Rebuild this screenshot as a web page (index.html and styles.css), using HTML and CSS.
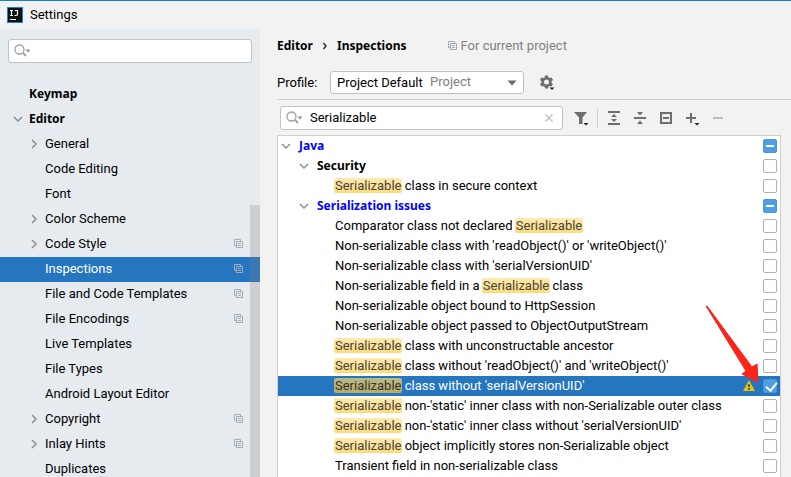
FILE: index.html
```html
<!DOCTYPE html>
<html lang="en">
<head>
<meta charset="utf-8">
<title>Settings</title>
<link rel="stylesheet" href="styles.css">
</head>
<body>
<svg class="defs" aria-hidden="true">
  <symbol id="down" viewBox="0 0 10 10"><path d="M1 3l4 4 4-4" fill="none" stroke="#8c8f92" stroke-width="1.5"/></symbol>
  <symbol id="right" viewBox="0 0 10 10"><path d="M3 1l4 4-4 4" fill="none" stroke="#8c8f92" stroke-width="1.5"/></symbol>
  <symbol id="copy" viewBox="0 0 10 10"><path d="M2.500 6.500H.5V.5H6.500V2.500M2.500 2.500H8.500V8.500H2.500ZM4 4.500H7M4 6.500H7" fill="none" stroke="#a3adb5"/></symbol>
  <symbol id="search" viewBox="0 0 18 14"><circle cx="5.500" cy="5.500" r="4.500" fill="none" stroke="#9aa0a5" stroke-width="1.300"/><path d="M9 9l3 3" stroke="#9aa0a5" stroke-width="1.800"/><path d="M11.500 5.500h5L14 8.500z" fill="#8c9196"/></symbol>
</svg>

<header class="titlebar">
  <svg class="logo" viewBox="0 0 16 16" aria-hidden="true"><path d="M0 0h16v16H0z" fill="#1a7fe0"/><path d="M1 1h14v14H1z" fill="#111"/><path d="M3 3.500h3M4.500 3.500v5M3 8.500h3M8 3.500h3M10.500 3.500v3.500q0 1.500-1.500 1.500H7.500M3 12.500h6" fill="none" stroke="#fff" stroke-width="1.200"/></svg>
  <h1>Settings</h1>
</header>

<div class="window">
  <nav class="sidebar" aria-label="Settings">
    <label class="search side-search">
      <svg class="glass" aria-hidden="true"><use href="#search"/></svg>
      <input type="text" aria-label="Search settings">
    </label>
    <ul class="pages">
      <li class="top"><span class="chev"></span><a href="#">Keymap</a></li>
      <li class="top"><svg class="chev"><use href="#down"/></svg><a href="#">Editor</a></li>
      <li><svg class="chev"><use href="#right"/></svg><a href="#">General</a></li>
      <li><span class="chev"></span><a href="#">Code Editing</a></li>
      <li><span class="chev"></span><a href="#">Font</a></li>
      <li><svg class="chev"><use href="#right"/></svg><a href="#">Color Scheme</a></li>
      <li><svg class="chev"><use href="#right"/></svg><a href="#">Code Style</a><svg class="copy"><use href="#copy"/></svg></li>
      <li class="selected"><span class="chev"></span><a href="#">Inspections</a><svg class="copy"><use href="#copy"/></svg></li>
      <li><span class="chev"></span><a href="#">File and Code Templates</a><svg class="copy"><use href="#copy"/></svg></li>
      <li><span class="chev"></span><a href="#">File Encodings</a><svg class="copy"><use href="#copy"/></svg></li>
      <li><span class="chev"></span><a href="#">Live Templates</a></li>
      <li><span class="chev"></span><a href="#">File Types</a></li>
      <li><span class="chev"></span><a href="#">Android Layout Editor</a></li>
      <li><svg class="chev"><use href="#right"/></svg><a href="#">Copyright</a><svg class="copy"><use href="#copy"/></svg></li>
      <li><svg class="chev"><use href="#right"/></svg><a href="#">Inlay Hints</a><svg class="copy"><use href="#copy"/></svg></li>
      <li><span class="chev"></span><a href="#">Duplicates</a></li>
    </ul>
    <div class="scrollbar"></div>
  </nav>

  <main class="content">
    <div class="crumbs">
      <b>Editor</b>
      <svg class="sep" viewBox="0 0 6 8" aria-hidden="true"><path d="M1.500 1l2.500 3-2.500 3" fill="none" stroke="#222" stroke-width="1.300"/></svg>
      <b>Inspections</b>
      <span class="scope"><svg class="copy"><use href="#copy"/></svg>For current project</span>
    </div>

    <div class="profile">
      <label for="profile">Profile:</label>
      <div class="combo">
        <select id="profile"><option>Project Default</option></select>
        <span class="hint">Project</span>
        <svg class="arrow" viewBox="0 0 10 6" aria-hidden="true"><path d="M.5 .5h9L5 5.500z" fill="#6a6a6a"/></svg>
      </div>
      <button class="tool" aria-label="Profile actions"><svg viewBox="0 0 18 18"><path d="M6 1.500h3l.4 1.900 1.300.7 1.800-.6L14 6l-1.400 1.300v1.400L14 10l-1.500 2.500-1.800-.6-1.300.7L9 14.500H6l-.4-1.900-1.300-.7-1.800.6L1 10l1.400-1.300V7.300L1 6l1.500-2.500 1.800.6 1.300-.7zM7.500 5.500a2.500 2.500 0 1 0 0 5 2.500 2.500 0 0 0 0-5z" fill="#6e6e6e" fill-rule="evenodd"/><path d="M10.500 13.500h5L13 16z" fill="#222"/></svg></button>
    </div>

    <div class="toolbar">
      <label class="search filter">
        <svg class="glass" aria-hidden="true"><use href="#search"/></svg>
        <input type="text" value="Serializable" aria-label="Filter inspections">
        <button class="clear" aria-label="Clear"><svg viewBox="0 0 8 8"><path d="M.5.5l7 7M7.500.5l-7 7" stroke="#b5bdc4" stroke-width="1.100"/></svg></button>
      </label>
      <div class="tools">
        <button class="tool" aria-label="Filter"><svg viewBox="0 0 18 18"><path d="M2 3h13L10.500 8.500V15H7V8.500z" fill="#6e6e6e"/><path d="M11.500 14h5L14 16.500z" fill="#222"/></svg></button>
        <span class="divider"></span>
        <button class="tool" aria-label="Expand all"><svg viewBox="0 0 18 18"><path d="M3 2h12v2H3zM3 14h12v2H3zM9 5l3 3H6zM9 13l3-3H6z" fill="#6e6e6e"/></svg></button>
        <button class="tool" aria-label="Collapse all"><svg viewBox="0 0 18 18"><path d="M3 8h12v2H3zM6 3h6L9 6.500zM6 15h6l-3-3.500z" fill="#6e6e6e"/></svg></button>
        <button class="tool" aria-label="Reset to empty"><svg viewBox="0 0 18 18"><path d="M4 4h10v10H4z" fill="none" stroke="#6e6e6e" stroke-width="2"/><path d="M6 8h6v2H6z" fill="#6e6e6e"/></svg></button>
        <button class="tool" aria-label="Add"><svg viewBox="0 0 18 18"><path d="M3 8h10v2H3zM7 4h2v10H7z" fill="#6e6e6e"/><path d="M11.500 14h5L14 16.500z" fill="#222"/></svg></button>
        <button class="tool" aria-label="Remove"><svg viewBox="0 0 18 18"><path d="M4 8h10v2H4z" fill="#bdbdbd"/></svg></button>
      </div>
    </div>

    <div class="panel">
      <ul class="tree">
        <li class="l0 blue"><svg class="chev"><use href="#down"/></svg><label for="c0">Java</label><input id="c0" class="mixed" type="checkbox"></li>
        <li class="l1"><svg class="chev"><use href="#down"/></svg><label for="c1">Security</label><input id="c1" type="checkbox"></li>
        <li class="l2"><label for="c2"><mark>Serializable</mark> class in secure context</label><input id="c2" type="checkbox"></li>
        <li class="l1 blue"><svg class="chev"><use href="#down"/></svg><label for="c3">Serialization issues</label><input id="c3" class="mixed" type="checkbox"></li>
        <li class="l2"><label for="c4">Comparator class not declared <mark>Serializable</mark></label><input id="c4" type="checkbox"></li>
        <li class="l2"><label for="c5">Non-serializable class with 'readObject()' or 'writeObject()'</label><input id="c5" type="checkbox"></li>
        <li class="l2"><label for="c6">Non-serializable class with 'serialVersionUID'</label><input id="c6" type="checkbox"></li>
        <li class="l2"><label for="c7">Non-serializable field in a <mark>Serializable</mark> class</label><input id="c7" type="checkbox"></li>
        <li class="l2"><label for="c8">Non-serializable object bound to HttpSession</label><input id="c8" type="checkbox"></li>
        <li class="l2"><label for="c9">Non-serializable object passed to ObjectOutputStream</label><input id="c9" type="checkbox"></li>
        <li class="l2"><label for="c10"><mark>Serializable</mark> class with unconstructable ancestor</label><input id="c10" type="checkbox"></li>
        <li class="l2"><label for="c11"><mark>Serializable</mark> class without 'readObject()' and 'writeObject()'</label><input id="c11" type="checkbox"></li>
        <li class="l2 selected"><label for="c12"><mark>Serializable</mark> class without 'serialVersionUID'</label><svg class="warn" viewBox="0 0 12 12" aria-hidden="true"><path d="M6 0l6 11H0z" fill="#e9c20a"/><path d="M6 4v3M6 8v2" stroke="#3b5a70" stroke-width="1.800"/></svg><input id="c12" type="checkbox" checked></li>
        <li class="l2"><label for="c13"><mark>Serializable</mark> non-'static' inner class with non-Serializable outer class</label><input id="c13" type="checkbox"></li>
        <li class="l2"><label for="c14"><mark>Serializable</mark> non-'static' inner class without 'serialVersionUID'</label><input id="c14" type="checkbox"></li>
        <li class="l2"><label for="c15"><mark>Serializable</mark> object implicitly stores non-Serializable object</label><input id="c15" type="checkbox"></li>
        <li class="l2"><label for="c16">Transient field in non-serializable class</label><input id="c16" type="checkbox"></li>
      </ul>
      <svg class="pointer" viewBox="0 0 54 78" aria-hidden="true"><path d="M1 0L2 0 47 61 52 58 53 76 37 68 41 65z" fill="#fb2416" stroke="#fb2416" stroke-linejoin="round"/></svg>
    </div>
  </main>
</div>
</body>
</html>
```
FILE: styles.css
```css
* { box-sizing: border-box; }
body {
  margin: 0;
  height: 100vh;
  overflow: hidden;
  display: flex;
  flex-direction: column;
  background: #f2f2f2;
  color: #000;
  font: 13px/20px Roboto, "Noto Sans", sans-serif;
}
svg { display: block; flex: none; }
.defs { display: none; }
ul { list-style: none; margin: 0; padding: 0; }
a { color: inherit; text-decoration: none; }
button { padding: 0; border: 0; background: none; }
input, select { font: inherit; color: inherit; }

.titlebar {
  flex: none;
  display: flex;
  align-items: center;
  gap: 7px;
  height: 29px;
  padding-left: 7px;
  border-top: 1px solid #1a7fd4;
}
.titlebar h1 { margin: 0; font-size: 13px; font-weight: 400; }
.logo { width: 16px; height: 16px; }

.window { flex: 1; min-height: 0; display: flex; }
.sidebar {
  position: relative;
  flex: none;
  width: 260px;
  padding-top: 10px;
  overflow: hidden;
  background: #e6ebf0;
}
.search {
  display: flex;
  align-items: center;
  height: 24px;
  padding: 0 5px;
  background: #fff;
  border: 1px solid #c0c2c4;
  border-radius: 3px;
}
.search input {
  flex: 1;
  min-width: 0;
  padding: 0 0 0 6px;
  border: 0;
  outline: 0;
  background: none;
}
.side-search { margin: 0 8px 19px; }
.glass { width: 18px; height: 14px; }
.pages li {
  display: flex;
  align-items: center;
  gap: 6px;
  height: 25px;
  padding: 0 16px 2px 29px;
}
.pages .top, .crumbs b, .l0, .l1 { font: 700 12px/20px "Noto Sans", "Open Sans", sans-serif; }
.pages li.top { padding-left: 13px; }
.pages a { flex: 1; }
.chev { flex: none; width: 10px; height: 10px; }
.copy { width: 10px; height: 10px; }
.selected { background: #2675bf; color: #fff; }
.scrollbar {
  position: absolute;
  right: 0;
  top: 176px;
  bottom: 0;
  width: 10px;
  background: rgba(128, 128, 128, 0.25);
}

.content {
  flex: 1;
  min-width: 0;
  display: flex;
  flex-direction: column;
  padding: 7px 0 0 17px;
}
.crumbs { display: flex; align-items: center; gap: 9px; }
.sep { width: 6px; height: 8px; }
.scope {
  display: flex;
  align-items: center;
  gap: 3px;
  margin-left: 32px;
  color: #808080;
}
.profile {
  display: flex;
  align-items: center;
  gap: 10px;
  padding: 15px 0 5px;
  border-bottom: 1px solid #cfcfcf;
}
.profile label { width: 43px; }
.profile .tool { margin-left: 5px; }
.combo { position: relative; width: 194px; }
.combo select {
  display: block;
  width: 100%;
  height: 23px;
  padding: 0 6px;
  appearance: none;
  border: 1px solid #c0c0c0;
  border-radius: 3px;
  background: #fff;
}
.hint { position: absolute; left: 100px; top: 1px; color: #808080; pointer-events: none; }
.arrow { position: absolute; right: 7px; top: 9px; width: 10px; height: 6px; pointer-events: none; }
.tool { flex: none; width: 18px; height: 18px; }
.tool svg { width: 18px; height: 18px; }

.toolbar { display: flex; align-items: center; gap: 9px; padding: 6px 64px 5px 3px; }
.filter { flex: 1; }
.clear { width: 8px; height: 8px; margin-right: 4px; }
.clear svg { width: 8px; height: 8px; }
.tools { display: flex; align-items: center; gap: 8px; }
.divider { width: 1px; height: 20px; margin: 0 -1px; background: #cfcfcf; }

.panel {
  position: relative;
  flex: 1;
  min-height: 0;
  margin-right: 10px;
  border: 1px solid #cfcfcf;
  border-bottom: 0;
  background: #fff;
}
.tree { height: 100%; overflow: hidden; }
.tree li { display: flex; align-items: center; gap: 8px; height: 20px; padding-right: 3px; }
.tree label { flex: 1; white-space: nowrap; }
.tree .l0 { padding-left: 3px; }
.tree .l1 { padding-left: 21px; }
.tree .l2 { padding-left: 57px; }
.blue label { color: #0000ff; }
mark {
  display: inline-block;
  margin: 0 -1px;
  padding: 0 1px;
  line-height: 15px;
  border-radius: 2px;
  background: linear-gradient(#fdeab0, #fddc78);
  color: #444;
}
.selected mark { background: linear-gradient(#b9b886, #b9ad62); color: #333; }
.tree input {
  flex: none;
  width: 14px;
  height: 14px;
  margin: 0;
  appearance: none;
  border: 1px solid #b0b0b0;
  border-radius: 2px;
  background: #fff;
}
.tree .mixed, .tree input:checked { border-color: #4a97de; background: #4f9ee3; }
.tree .mixed::before { content: ""; display: block; width: 8px; height: 2px; margin: 5px 2px; background: #fff; }
.tree input:checked::before {
  content: "";
  display: block;
  width: 5px;
  height: 9px;
  margin: 0 4px;
  border: solid #fff;
  border-width: 0 2px 2px 0;
  transform: rotate(40deg);
}
.warn { width: 12px; height: 12px; }
.pointer { position: absolute; right: 21px; top: 170px; width: 54px; height: 78px; pointer-events: none; }
```
